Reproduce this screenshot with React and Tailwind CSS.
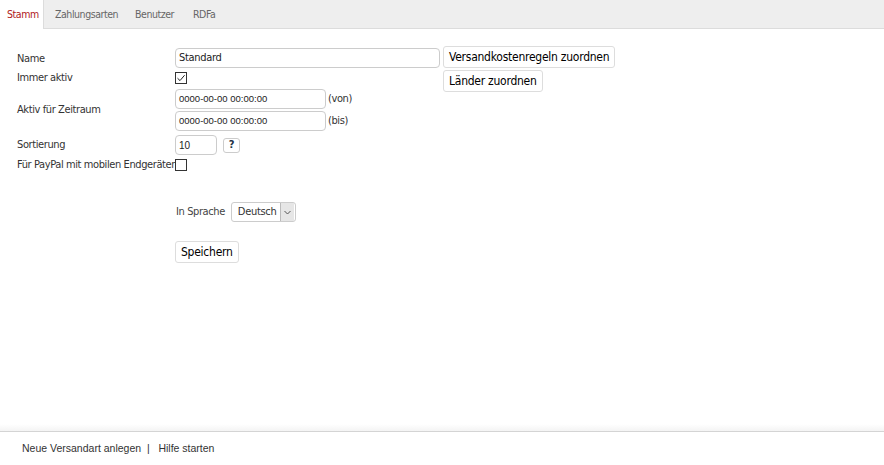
import React from 'react';

const tabs = [
  { label: 'Stamm', w: 'w-[44px] pl-[7px]' },
  { label: 'Zahlungsarten', w: 'w-[80px] pl-[11px]' },
  { label: 'Benutzer', w: 'w-[58px] pl-[11px]' },
  { label: 'RDFa', w: 'w-[50px] pl-[11px]' },
];

const Label = ({ children, className = '' }) => (
  <div className={`w-[158px] shrink-0 whitespace-nowrap text-[11px] tracking-[-0.4px] text-[#333] ${className}`}>{children}</div>
);

const TextInput = ({ value, className = '' }) => (
  <div className={`h-[20px] rounded-[4px] border border-[#ccc] bg-white px-[3px] flex items-center text-[#222] ${className}`}>
    {value}
  </div>
);

const Check = ({ checked }) => (
  <div className="w-[12px] h-[12px] border border-[#333] bg-white flex items-center justify-center">
    {checked && (
      <svg width="10" height="10" viewBox="0 0 10 10">
        <path d="M1.5 5.2 L4 7.6 L8.6 2.2" fill="none" stroke="#222" strokeWidth="1" />
      </svg>
    )}
  </div>
);

const Button = ({ children, className = '' }) => (
  <div className={`h-[22px] inline-flex items-center px-[5px] rounded-[3px] border border-[#ddd] bg-white text-[12px] tracking-[-0.25px] text-black whitespace-nowrap ${className}`}>
    {children}
  </div>
);

export default function App() {
  return (
    <div className="w-[884px] h-[465px] bg-white flex flex-col font-['DejaVu_Sans_Condensed','DejaVu_Sans',sans-serif]">
      {/* tabs */}
      <div className="h-[29px] bg-[#eeeeee] border-b border-[#dcdcdc] flex items-stretch shrink-0">
        {tabs.map((t, i) => (
          <div
            key={t.label}
            className={`flex items-center pt-px whitespace-nowrap text-[10.5px] tracking-[-0.45px] ${t.w} ${i === 0 ? 'bg-white text-[#b0201b] -mb-px border-r border-[#dcdcdc]' : 'text-[#666]'}`}
          >
            {t.label}
          </div>
        ))}
      </div>

      {/* form */}
      <div className="flex-1 pl-[17px] pt-[18px]">
        <div className="flex">
          <div className="flex flex-col">
            <div className="flex items-center h-[22px] pt-[2px]">
              <Label>Name</Label>
              <TextInput value="Standard" className="w-[265px] text-[11px] tracking-[-0.3px] -mt-[2px]" />
            </div>
            <div className="flex items-center h-[16px] mt-[1px]">
              <Label>Immer aktiv</Label>
              <Check checked />
            </div>
            <div className="flex items-center mt-[2px]">
              <Label>Aktiv für Zeitraum</Label>
              <div className="flex flex-col">
                <div className="flex items-center h-[22px]">
                  <TextInput value="0000-00-00 00:00:00" className="w-[151px] font-['Liberation_Sans'] text-[9.5px]" />
                  <span className="ml-[2px] text-[11px] tracking-[-0.4px] text-[#333]">(von)</span>
                </div>
                <div className="flex items-center h-[22px]">
                  <TextInput value="0000-00-00 00:00:00" className="w-[151px] font-['Liberation_Sans'] text-[9.5px]" />
                  <span className="ml-[2px] text-[11px] tracking-[-0.4px] text-[#333]">(bis)</span>
                </div>
              </div>
            </div>
            <div className="flex items-center h-[22px] mt-[2px]">
              <Label>Sortierung</Label>
              <TextInput value="10" className="w-[42px] font-['Liberation_Sans'] text-[10px]" />
              <div className="ml-[6px] w-[17px] h-[15px] rounded-[3px] border border-[#ccc] flex items-center justify-center text-[11px] font-bold text-[#234]">?</div>
            </div>
            <div className="flex items-center h-[16px] mt-[1px]">
              <Label>Für PayPal mit mobilen Endgeräten</Label>
              <Check />
            </div>
          </div>
          <div className="flex flex-col gap-[2px] ml-[3px] -mt-[1px] items-start">
            <Button>Versandkostenregeln zuordnen</Button>
            <Button>Länder zuordnen</Button>
          </div>
        </div>

        <div className="ml-[159px] mt-[29px] flex items-center">
          <span className="text-[11px] tracking-[-0.4px] text-[#444]">In Sprache</span>
          <div className="ml-[6px] h-[20px] w-[65px] rounded-[3px] border border-[#ccc] bg-white flex items-center">
            <span className="flex-1 pl-[6px] text-[11px] tracking-[-0.3px] text-[#333]">Deutsch</span>
            <div className="w-[14px] h-[18px] mr-px bg-[#e6e6e6] border-l border-[#bbb] flex items-center justify-center">
              <svg width="7" height="5" viewBox="0 0 7 5">
                <path d="M0.5 1 L3.5 4 L6.5 1" fill="none" stroke="#555" strokeWidth="1" />
              </svg>
            </div>
          </div>
        </div>

        <div className="ml-[158px] mt-[17px]">
          <Button className="px-[4px]">Speichern</Button>
        </div>
      </div>

      {/* footer */}
      <div className="h-[34px] shrink-0 border-t border-[#d4d4d4] relative">
        <div className="absolute left-0 right-0 -top-[8px] h-[7px] bg-gradient-to-b from-white to-[#f4f4f4]" />
        <div className="pl-[22px] pt-[9px] text-[10.5px] text-[#333] font-['Liberation_Sans'] whitespace-pre">
          Neue Versandart anlegen  |   Hilfe starten
        </div>
      </div>
    </div>
  );
}
